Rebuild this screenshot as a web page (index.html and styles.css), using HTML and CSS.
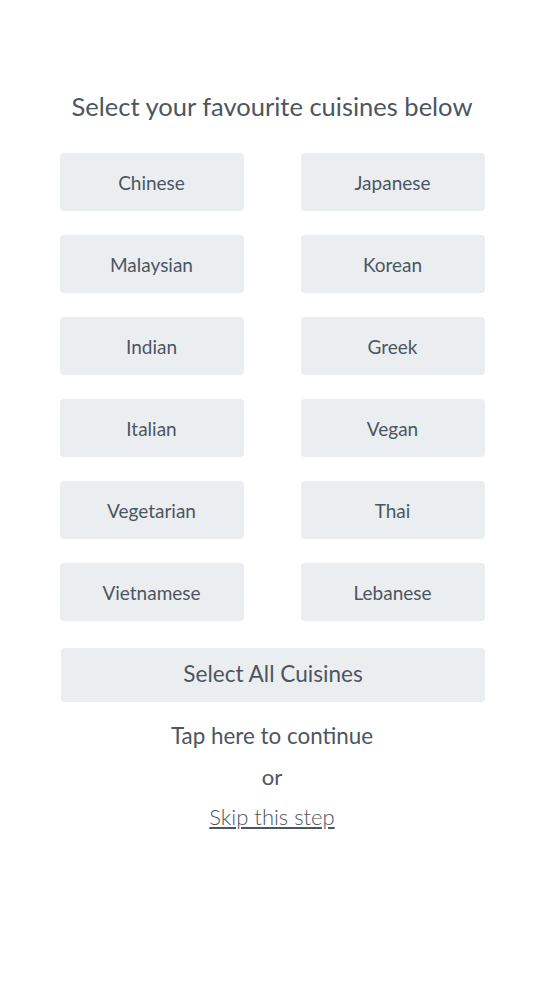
FILE: index.html
```html
<!DOCTYPE html>
<html>
<head>
<meta charset="utf-8">
<link rel="stylesheet" href="styles.css">
</head>
<body>
<main class="page">
  <h1 class="title">Select your favourite cuisines below</h1>
  <div class="grid">
    <button class="chip">Chinese</button>
    <button class="chip">Japanese</button>
    <button class="chip">Malaysian</button>
    <button class="chip">Korean</button>
    <button class="chip">Indian</button>
    <button class="chip">Greek</button>
    <button class="chip">Italian</button>
    <button class="chip">Vegan</button>
    <button class="chip">Vegetarian</button>
    <button class="chip">Thai</button>
    <button class="chip">Vietnamese</button>
    <button class="chip">Lebanese</button>
  </div>
  <button class="select-all">Select All Cuisines</button>
  <p class="continue">Tap here to continue</p>
  <p class="or">or</p>
  <a class="skip" href="#">Skip this step</a>
</main>
</body>
</html>
```
FILE: styles.css
```css
* { box-sizing: border-box; }
html, body { margin: 0; padding: 0; background: #fff; }
body {
  font-family: Lato, "Open Sans", sans-serif;
  color: #4b5661;
}
.page {
  width: 544px;
  display: flex;
  flex-direction: column;
  align-items: center;
  padding-top: 89px;
}
.title {
  margin: 0;
  font-size: 25.5px;
  font-weight: 400;
  line-height: 34px;
  color: #4b5661;
}
.grid {
  margin-top: 30px;
  display: grid;
  grid-template-columns: 184px 184px;
  column-gap: 57px;
  row-gap: 24px;
}
.chip, .select-all {
  border: none;
  background: #ebeef1;
  border-radius: 4px;
  font-family: inherit;
  color: #4b5661;
  padding: 0;
}
.chip {
  height: 58px;
  font-size: 19px;
}
.select-all {
  margin-top: 27px;
  width: 424px;
  height: 54px;
  font-size: 22.6px;
  padding-bottom: 3px;
  margin-left: 2px;
}
.continue {
  margin: 20px 0 0;
  font-size: 22.4px;
  line-height: 28px;
}
.or {
  margin: 13px 0 0;
  font-size: 22px;
  line-height: 28px;
}
.skip {
  margin-top: 12px;
  font-size: 22px;
  line-height: 28px;
  font-weight: 300;
  color: #4b5661;
  text-decoration: underline;
}
```
